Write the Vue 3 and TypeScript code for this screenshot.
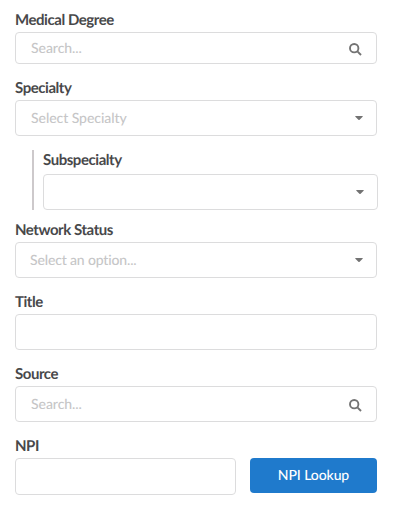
<script setup lang="ts">
import { ref } from 'vue'

type FieldKind = 'search' | 'select' | 'text'

interface Field {
  id: string
  label: string
  kind: FieldKind
  placeholder?: string
  variant?: 'compact' | 'nested' | 'status'
}

const fields: Field[] = [
  { id: 'degree', label: 'Medical Degree', kind: 'search', placeholder: 'Search...', variant: 'compact' },
  { id: 'specialty', label: 'Specialty', kind: 'select', placeholder: 'Select Specialty' },
  { id: 'subspecialty', label: 'Subspecialty', kind: 'select', variant: 'nested' },
  { id: 'network', label: 'Network Status', kind: 'select', placeholder: 'Select an option...', variant: 'status' },
  { id: 'title', label: 'Title', kind: 'text' },
  { id: 'source', label: 'Source', kind: 'search', placeholder: 'Search...' },
]

const values = ref<Record<string, string>>({})
const npi = ref('')
</script>

<template>
  <form class="form" @submit.prevent>
    <div v-for="field in fields" :key="field.id" class="field" :class="field.variant">
      <label class="label" :for="field.id">{{ field.label }}</label>
      <div class="control" :class="field.kind">
        <input :id="field.id" v-model="values[field.id]" class="input" type="text" autocomplete="off" :placeholder="field.placeholder" />
        <svg v-if="field.kind === 'search'" class="search-icon" viewBox="0 0 13 13" aria-hidden="true">
          <circle cx="5.2" cy="5.2" r="4.2" />
          <path d="M8.4 8.4L12 12" />
        </svg>
        <svg v-else-if="field.kind === 'select'" class="caret" viewBox="0 0 8 4" aria-hidden="true">
          <path d="M0.5 0H7.5Q8 0.2 7.6 0.7L4.6 3.7Q4 4.2 3.4 3.7L0.4 0.7Q0 0.2 0.5 0Z" />
        </svg>
      </div>
    </div>
    <div class="field">
      <label class="label" for="npi">NPI</label>
      <div class="npi-row">
        <div class="control npi-control">
          <input id="npi" v-model="npi" class="input" type="text" autocomplete="off" />
        </div>
        <button class="lookup" type="button">NPI Lookup</button>
      </div>
    </div>
  </form>
</template>

<style>
body {
  background: #fff;
}
</style>

<style scoped>
.form {
  box-sizing: border-box;
  width: 400px;
  height: 510px;
  padding: 10px 23px 0 15px;
  font-family: Lato, "Liberation Sans", sans-serif;
  font-size: 14px;
  text-rendering: geometricPrecision;
}

.field {
  margin-bottom: 14px;
}

.label {
  display: block;
  height: 20px;
  margin-bottom: 2px;
  color: #48484a;
  font-size: 15px;
  font-weight: 700;
  letter-spacing: -0.45px;
  line-height: 20px;
}

.control {
  display: flex;
  align-items: center;
  box-sizing: border-box;
  height: 36px;
  padding: 0 14px 0 15px;
  border: 1px solid #dcdcdd;
  border-radius: 4px;
  background: #fff;
}

.control.select {
  padding-right: 13px;
}

.compact .control {
  height: 32px;
}

.status .control {
  padding-left: 14px;
}

.nested {
  margin: 0 -1px 10px 17px;
  padding-left: 9px;
  border-left: 2px solid #cdc9cb;
}

.nested .label {
  margin-bottom: 4px;
}

.input {
  flex: 1;
  min-width: 0;
  height: 20px;
  padding: 0;
  border: 0;
  outline: 0;
  background: transparent;
  color: #4b4b4d;
  font: inherit;
  line-height: 20px;
  text-rendering: inherit;
}

.input::placeholder {
  color: #c6c6c7;
  font-weight: 500;
  letter-spacing: -0.05px;
  opacity: 1;
}

.status .input::placeholder {
  letter-spacing: -0.15px;
}

.search-icon {
  width: 13px;
  height: 13px;
  margin-top: 2px;
  fill: none;
  stroke: #737373;
  stroke-width: 1.9;
}

.caret {
  width: 8px;
  height: 4px;
  fill: #737373;
}

.npi-row {
  display: flex;
  align-items: flex-start;
  gap: 14px;
}

.npi-control {
  width: 221px;
  height: 37px;
}

.lookup {
  flex: 1;
  height: 35px;
  padding: 0 0 2px;
  border: 0;
  border-radius: 4px;
  background: #1f7acc;
  color: #fff;
  font: inherit;
  font-weight: 500;
  letter-spacing: -0.1px;
  text-rendering: inherit;
}
</style>
